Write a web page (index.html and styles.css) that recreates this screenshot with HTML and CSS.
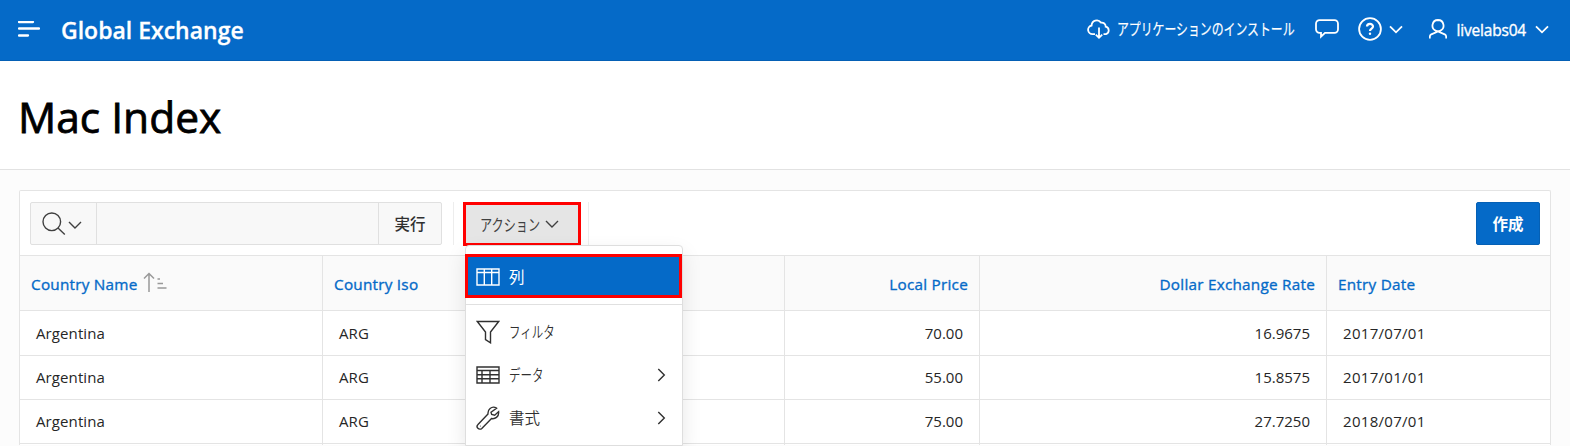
FILE: index.html
```html
<!DOCTYPE html>
<html lang="ja">
<head>
<meta charset="utf-8">
<title>Mac Index</title>
<link rel="stylesheet" href="styles.css">
</head>
<body>
<header class="header">
  <svg class="burger" width="22" height="16" viewBox="0 0 22 16"><path d="M1 1h14M1 7.500h20M1 14.500h9"/></svg>
  <span class="brand">Global Exchange</span>
  <nav class="nav">
    <svg class="icon nav-cloud" width="24" height="22" viewBox="0 0 24 22"><path d="M8 16.200H5.700a4.400 4.400 0 0 1-1.100-8.700A5.200 5.200 0 0 1 14 4.600a4 4 0 0 1 4.700 4.100A3.900 3.900 0 0 1 19 16.200h-2.500M12 9.500v10M8.800 16.600l3.200 3.200 3.200-3.200"/></svg>
    <span class="nav-install"><span class="kana">アプリケーションのインストール</span></span>
    <svg class="icon nav-chat" width="24" height="20" viewBox="0 0 24 20"><path d="M4.500 1.200h15a3.500 3.500 0 0 1 3.500 3.500v5.600a3.500 3.500 0 0 1-3.500 3.500H10L6 17.700v-3.900H4.500A3.500 3.500 0 0 1 1 10.300V4.700a3.500 3.500 0 0 1 3.500-3.500z"/></svg>
    <svg class="icon nav-help" width="24" height="24" viewBox="0 0 24 24"><circle cx="12" cy="12" r="10.900"/><path class="thick" d="M9 9.600c0-3.600 6-3.500 6-.2 0 2.200-3 2.100-3 4.600"/><circle class="dot" cx="12" cy="16.800" r="1.200"/></svg>
    <svg class="icon nav-help-caret" width="14" height="9" viewBox="0 0 14 9"><path d="M1 1.300l6 6 6-6"/></svg>
    <svg class="icon nav-user" width="18" height="20" viewBox="0 0 18 20"><path d="M9 1a5.600 5.600 0 0 1 2 10.800 5.200 5.200 0 0 1-4 0A5.600 5.600 0 0 1 9 1zM.8 19.500v-1.500c0-1.200.5-2.100 1.500-2.700L9 12.400l6.700 2.900c1 .6 1.500 1.500 1.500 2.700v1.500"/></svg>
    <span class="nav-name">livelabs04</span>
    <svg class="icon" width="14" height="9" viewBox="0 0 14 9"><path d="M1 1.300l6 6 6-6"/></svg>
  </nav>
</header>
<section class="title-bar"><h1 class="title">Mac Index</h1></section>
<main class="main">
  <div class="report">
    <div class="toolbar">
      <div class="search">
        <button class="search-pick"><svg class="icon" width="24" height="24" viewBox="0 0 24 24"><circle cx="9.800" cy="9.800" r="8.800"/><path d="M16 16l6.800 6.500"/></svg><svg class="icon pick-caret" width="14" height="8" viewBox="0 0 14 8"><path d="M1 1l6 6 6-6"/></svg></button>
        <input class="search-input" type="text" aria-label="検索">
        <button class="search-go">実行</button>
      </div>
      <div class="actions-wrap">
        <button class="actions"><span class="actions-label"><span class="kana">アクション</span></span><svg class="icon" width="14" height="8" viewBox="0 0 14 8"><path d="M1 1l6 6 6-6"/></svg></button>
        <div class="menu">
          <div class="item item-active">
            <svg class="icon" width="24" height="18" viewBox="0 0 24 18"><path d="M1 1h22v16H1zM1 4.500h22M8.300 1v16M15.700 1v16"/></svg><span class="item-label">列</span>
          </div>
          <div class="item item-first">
            <svg class="icon" width="24" height="24" viewBox="0 0 24 24"><path d="M1.300 1.500h21.400L14.500 12v10.800L9.500 19.500V12z"/></svg><span class="item-label"><span class="kana">フィルタ</span></span>
          </div>
          <div class="item">
            <svg class="icon" width="24" height="18" viewBox="0 0 24 18"><path d="M1 1h22v16H1zM1 4.500h22M1 8.700h22M1 12.800h22M6 4.500V17M14 4.500V17"/></svg><span class="item-label"><span class="kana">データ</span></span>
            <svg class="icon more" width="9" height="14" viewBox="0 0 9 14"><path d="M1.300 1l6 6-6 6"/></svg>
          </div>
          <div class="item">
            <svg class="icon" width="24" height="24" viewBox="0 0 24 24"><path d="M20.500 2.200c-1.800-1.200-4.600-1.200-6.400.3-2 1.600-2.300 3.600-2.100 5.600L2 18.500a2.700 2.700 0 0 0 3.800 3.900L15.500 12.500c3.300.8 7.700-1.500 7.100-6.900l-3.900 3.600-3-.7-.7-2.300z"/><circle class="pin" cx="4.400" cy="20" r=".5"/></svg><span class="item-label">書式</span>
            <svg class="icon more" width="9" height="14" viewBox="0 0 9 14"><path d="M1.300 1l6 6-6 6"/></svg>
          </div>
        </div>
      </div>
      <button class="create">作成</button>
    </div>
    <table class="grid">
      <colgroup><col class="c1"><col class="c2"><col class="c3"><col class="c4"><col></colgroup>
      <thead>
        <tr><th>Country Name<svg class="sort" width="24" height="21" viewBox="0 0 24 21"><path d="M6 20V1.500M1 6.500l5-5 5 5M14.500 7h2.500M14.500 11.500h5.500M14.500 16h9"/></svg></th><th>Country Iso</th><th class="num">Local Price</th><th class="num">Dollar Exchange Rate</th><th>Entry Date</th></tr>
      </thead>
      <tbody>
        <tr><td>Argentina</td><td>ARG</td><td class="num">70.00</td><td class="num">16.9675</td><td class="date">2017/07/01</td></tr>
        <tr><td>Argentina</td><td>ARG</td><td class="num">55.00</td><td class="num">15.8575</td><td class="date">2017/01/01</td></tr>
        <tr><td>Argentina</td><td>ARG</td><td class="num">75.00</td><td class="num">27.7250</td><td class="date">2018/07/01</td></tr>
        <tr class="cut"><td></td><td></td><td></td><td></td><td></td></tr>
      </tbody>
    </table>
  </div>
</main>
</body>
</html>
```

FILE: styles.css
```css
* { box-sizing: border-box; }
body {
  margin: 0;
  background: #fcfcfc;
  color: #262626;
  font: 15px/20px "Open Sans", "Noto Sans CJK JP", sans-serif;
}
button { font-family: inherit; padding: 0; }
svg { display: block; flex: none; }
.icon { fill: none; stroke: currentColor; stroke-width: 1.4; }

.header {
  height: 61px;
  display: flex;
  align-items: center;
  padding: 0 21px 2px 18px;
  background: #056ac8;
  border-bottom: 1px solid #0560b5;
  color: #fff;
}
.burger { fill: none; stroke: #fff; stroke-width: 2.300; stroke-linecap: round; }
.brand { margin-left: 21px; font-size: 23px; font-weight: 600; line-height: 30px; padding-top: 2px; -webkit-text-stroke: .3px #fff; }
.nav { margin-left: auto; display: flex; align-items: center; }
.nav .icon { stroke-width: 1.8; }
.nav .thick { stroke-width: 2.200; }
.nav .dot { fill: #fff; stroke: none; }
.nav-install { width: 178px; margin: 0 20px 0 6px; font-size: 16px; font-weight: 400; white-space: nowrap; -webkit-text-stroke: .2px #fff; }
.nav-install .kana { transform: scaleX(.742); }
.kana { display: inline-block; transform-origin: 0 50%; white-space: nowrap; }
.nav-help { margin-left: 19px; }
.nav-help-caret { margin: 1px 26px 0 7px; }
.nav-name { margin: 0 9px 0 10px; font-size: 15.500px; letter-spacing: -.2px; padding-top: 1px; -webkit-text-stroke: .35px #fff; }

.title-bar {
  height: 109px;
  padding: 26px 18px 0;
  background: #fff;
  border-bottom: 1px solid #e2e2e2;
}
.title { margin: 0; color: #000; font-size: 42.500px; line-height: 60px; font-weight: 400; -webkit-text-stroke: .8px #000; }

.main { height: 276px; overflow: hidden; padding: 20px 19px 0; }
.report { width: 1532px; border: 1px solid #e4e4e4; border-bottom: 0; border-radius: 2px 2px 0 0; background: #fff; }
.toolbar { height: 64px; padding: 11px 10px; display: flex; align-items: flex-start; }
.search {
  width: 412px;
  height: 43px;
  display: flex;
  background: #f8f8f8;
  border: 1px solid #e0e0e0;
  border-radius: 2px;
}
.search-pick {
  width: 66px;
  border: 0;
  border-right: 1px solid #e0e0e0;
  background: none;
  color: #404040;
  display: flex;
  align-items: center;
  padding-left: 11px;
}
.pick-caret { margin: 2px 0 0 2px; }
.search-input { flex: 1; min-width: 0; border: 0; background: none; }
.search-go { width: 63px; border: 0; border-left: 1px solid #e0e0e0; background: none; color: #303030; font-size: 15.500px; font-weight: 500; }
.actions-wrap {
  position: relative;
  width: 136px;
  height: 43px;
  margin-left: 11px;
  padding-left: 9px;
  border: solid #ededed;
  border-width: 0 1px;
}
.actions {
  width: 118px;
  height: 44px;
  border: 3px solid #f00;
  background: #e5e5e5;
  color: #404040;
  display: flex;
  align-items: center;
  padding-left: 14px;
  font-size: 16px;
}
.actions-label { width: 60px; margin-right: 5px; text-align: left; }
.actions-label .kana { transform: scaleX(.76); }
.menu {
  position: absolute;
  left: 11px;
  top: 43px;
  width: 218px;
  height: 201px;
  padding-top: 8px;
  background: #fff;
  border: 1px solid #dedede;
  border-radius: 4px 4px 0 0;
  box-shadow: 0 8px 20px rgba(0, 0, 0, .1);
}
.item { height: 43px; display: flex; align-items: center; padding: 0 16px 0 10px; color: #303030; font-size: 16px; }
.item-active {
  height: 44px;
  margin: 0 0 0 -1px;
  padding: 1px 0 0 8px;
  border: 3px solid #f00;
  background: #056ac8;
  color: #fff;
}
.item-first { margin-top: 6px; height: 49px; border-top: 1px solid #e0e0e0; padding-top: 5px; }
.item-label { margin-left: 9px; font-size: 15.500px; font-weight: 350; }
.item-active .item-label { font-weight: 400; }
.item .kana { transform: scaleX(.74); }
.more { margin-left: auto; }
.pin { fill: currentColor; stroke: none; }
.create {
  width: 64px;
  height: 43px;
  margin-left: auto;
  border: 1px solid #0560b5;
  border-radius: 2px;
  background: #056ac8;
  color: #fff;
  font-size: 15.500px;
  font-weight: 700;
}

.grid { width: 100%; table-layout: fixed; border-collapse: separate; border-spacing: 0; }
.c1 { width: 303px; }
.c2 { width: 462px; }
.c3 { width: 195px; }
.c4 { width: 347px; }
.grid th {
  height: 55px;
  padding: 1px 11px 0;
  border-top: 1px solid #e4e4e4;
  background: #fafafa;
  color: #056ac8;
  font-weight: 400;
  -webkit-text-stroke: .35px #056ac8;
  font-size: 15.300px;
  letter-spacing: .24px;
  text-align: left;
}
.grid td { height: 44px; padding: 0 16px 1px; border-top: 1px solid #e4e4e4; font-size: 15px; letter-spacing: .1px; }
.grid .date { letter-spacing: .3px; }
.grid tr:first-child td { height: 45px; }
.grid .cut td { height: 2px; padding: 0; }
.grid th:not(:last-child), .grid td:not(:last-child) { border-right: 1px solid #e4e4e4; }
.grid .num { text-align: right; }
.grid td.num { letter-spacing: 0; }
.sort { display: inline-block; vertical-align: -3px; margin: -6px 0 0 5px; fill: none; stroke: #999; stroke-width: 1.500; }
```
